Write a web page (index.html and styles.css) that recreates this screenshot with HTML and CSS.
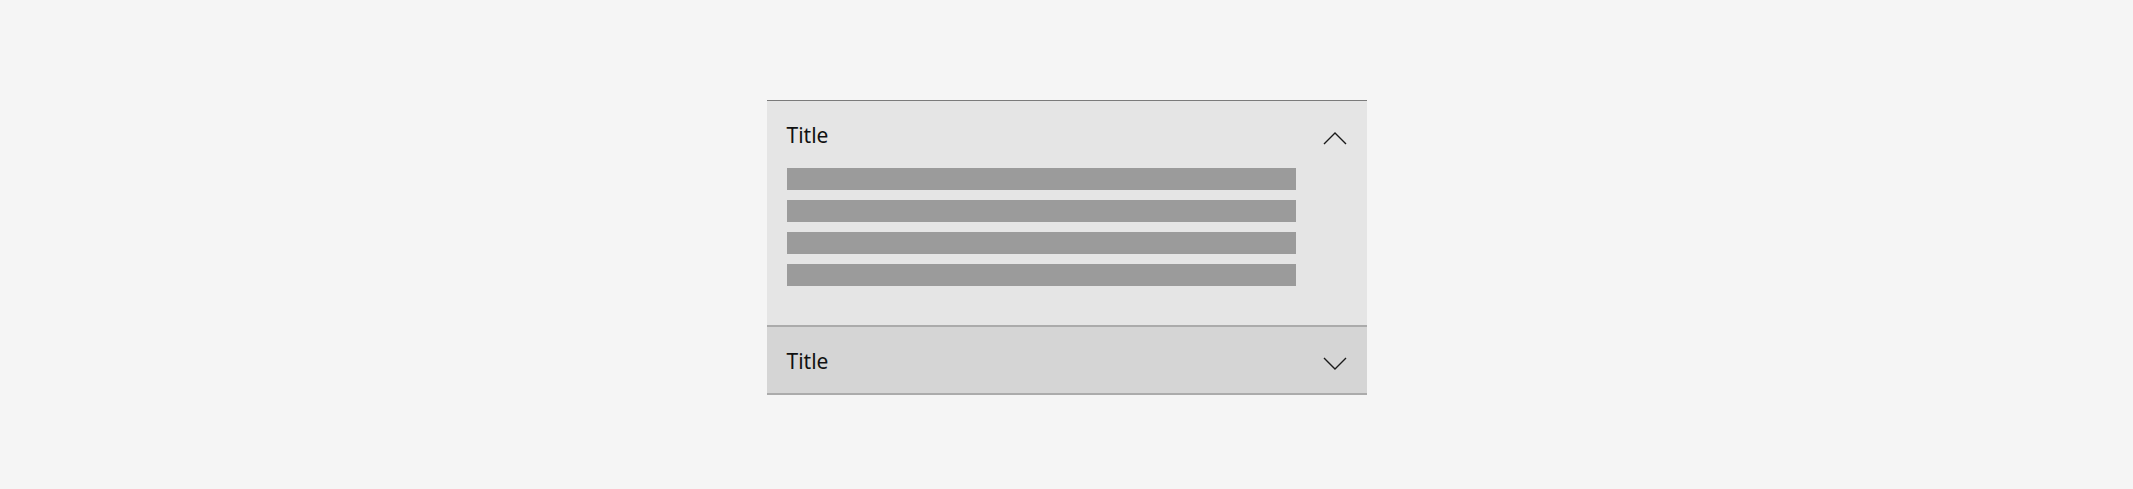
FILE: index.html
```html
<!DOCTYPE html>
<html lang="en">
<head>
<meta charset="utf-8">
<title>Accordion</title>
<link rel="stylesheet" href="styles.css">
</head>
<body>
<div class="page">
  <div class="accordion">
    <section class="item item-open">
      <div class="item-header">
        <span class="item-title">Title</span>
        <svg class="chevron" width="24" height="14" viewBox="0 0 24 14"><path d="M1 13 L12 2 L23 13" fill="none" stroke="#1a1a1a" stroke-width="1.4"/></svg>
      </div>
      <div class="item-content">
        <div class="bar"></div>
        <div class="bar"></div>
        <div class="bar"></div>
        <div class="bar"></div>
      </div>
    </section>
    <section class="item item-closed">
      <div class="item-header">
        <span class="item-title">Title</span>
        <svg class="chevron chevron-down" width="24" height="14" viewBox="0 0 24 14"><path d="M1 1 L12 12 L23 1" fill="none" stroke="#1a1a1a" stroke-width="1.4"/></svg>
      </div>
    </section>
  </div>
</div>
</body>
</html>
```
FILE: styles.css
```css
html, body {
  margin: 0;
  padding: 0;
  background: #f5f5f5;
}
body {
  font-family: "Noto Sans", "Open Sans", sans-serif;
  color: #111111;
}
.page {
  padding-top: 100px;
  display: flex;
  justify-content: center;
}
.accordion {
  width: 600px;
  border-top: 1px solid #7b7b7b;
}
.item-open {
  background: #e5e5e5;
  border-bottom: 2px solid #ababab;
}
.item-closed {
  background: #d5d5d5;
  border-bottom: 2px solid #ababab;
}
.item-header {
  height: 66px;
  padding: 0 20px;
  display: flex;
  align-items: center;
  justify-content: space-between;
}
.item-title {
  font-size: 21px;
  line-height: 24px;
  padding-top: 1px;
}
.chevron {
  display: block;
  margin-top: 8px;
}
.item-content {
  padding: 1px 20px 39px;
  display: flex;
  flex-direction: column;
  gap: 10px;
}
.bar {
  width: 509px;
  height: 22px;
  background: #9b9b9b;
}
```
